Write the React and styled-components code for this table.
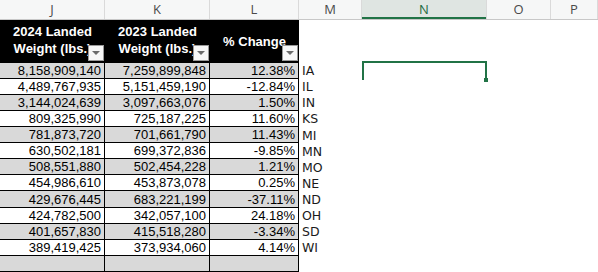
import React from 'react';
import styled, { createGlobalStyle } from 'styled-components';

const GlobalStyle = createGlobalStyle`
    body {
        margin: 0;
        background: #ffffff;
        font-family: "Liberation Sans", Arial, sans-serif;
    }
`;

const COLUMNS = '105px 105px 89px 63px 125px 64px 1fr';

const Sheet = styled.div`
    display: flex;
    flex-direction: column;
    width: 598px;
    height: 272px;
    overflow: hidden;
    background: #ffffff;
`;

const LetterRow = styled.div`
    display: grid;
    grid-template-columns: ${COLUMNS};
    height: 21px;
    background: #f6f7f7;
    border-bottom: 1px solid #c8c8c8;
    box-sizing: border-box;
`;

const Letter = styled.div`
    display: flex;
    align-items: center;
    justify-content: center;
    font-family: "Open Sans", "Noto Sans", sans-serif;
    font-size: 13px;
    color: ${props => props.active ? '#1e6b41' : '#4a4a4a'};
    background: ${props => props.active ? '#dfe5e2' : 'transparent'};
    border-right: 1px solid #dadada;
    box-shadow: ${props => props.active ? 'inset 0 -2px 0 #217346' : 'none'};
`;

const HeadRow = styled.div`
    display: grid;
    grid-template-columns: ${COLUMNS};
    height: 45px;
`;

const HeadCell = styled.div`
    position: relative;
    display: flex;
    flex-direction: column;
    align-items: center;
    justify-content: center;
    background: #000000;
    color: #ffffff;
    font-weight: 700;
    font-size: 13px;
    line-height: 17px;
    white-space: nowrap;
    overflow: hidden;
    padding-bottom: ${props => props.single ? '0' : '2px'};
`;

const FilterButton = styled.div`
    position: absolute;
    right: 1px;
    bottom: 2px;
    width: 16px;
    height: 16px;
    box-sizing: border-box;
    background: #f7f7f7;
    border: 1px solid #9a9a9a;
    display: flex;
    align-items: center;
    justify-content: center;

    &::after {
        content: '';
        width: 0;
        height: 0;
        border-left: 4px solid transparent;
        border-right: 4px solid transparent;
        border-top: 4px solid #6b6b6b;
        margin-top: 1px;
    }
`;

const DataRow = styled.div`
    display: grid;
    grid-template-columns: ${COLUMNS};
    height: 17px;
`;

const NumCell = styled.div`
    display: flex;
    align-items: center;
    justify-content: flex-end;
    padding-right: 3px;
    font-size: 13px;
    color: #000000;
    background: ${props => props.shaded ? '#d9d9d9' : '#ffffff'};
    border-right: 1px solid #000000;
    border-bottom: 1px solid #000000;
    box-sizing: border-box;
`;

const StateCell = styled.div`
    display: flex;
    align-items: center;
    padding-left: 3px;
    font-family: "DejaVu Sans", sans-serif;
    font-size: 12.5px;
    color: #1a1a1a;
`;

const Blank = styled.div`
    position: relative;
`;

const Selection = styled.div`
    position: absolute;
    left: 0;
    right: 0;
    top: -2px;
    height: 19px;
    border: 2px solid #217346;
    border-bottom: none;
    box-sizing: border-box;

    &::after {
        content: '';
        position: absolute;
        right: -3px;
        bottom: -2px;
        width: 4px;
        height: 4px;
        background: #217346;
    }
`;

const rows = [
    ['8,158,909,140', '7,259,899,848', '12.38%', 'IA'],
    ['4,489,767,935', '5,151,459,190', '-12.84%', 'IL'],
    ['3,144,024,639', '3,097,663,076', '1.50%', 'IN'],
    ['809,325,990', '725,187,225', '11.60%', 'KS'],
    ['781,873,720', '701,661,790', '11.43%', 'MI'],
    ['630,502,181', '699,372,836', '-9.85%', 'MN'],
    ['508,551,880', '502,454,228', '1.21%', 'MO'],
    ['454,986,610', '453,873,078', '0.25%', 'NE'],
    ['429,676,445', '683,221,199', '-37.11%', 'ND'],
    ['424,782,500', '342,057,100', '24.18%', 'OH'],
    ['401,657,830', '415,518,280', '-3.34%', 'SD'],
    ['389,419,425', '373,934,060', '4.14%', 'WI'],
    ['', '', '', ''],
];

const letters = ['J', 'K', 'L', 'M', 'N', 'O', 'P'];

const App = () => {
    return (
        <Sheet>
            <GlobalStyle />
            <LetterRow>
                {letters.map((l) => (
                    <Letter key={l} active={l === 'N'}>{l}</Letter>
                ))}
            </LetterRow>

            <HeadRow>
                <HeadCell>
                    <span>2024 Landed</span>
                    <span>Weight (lbs.)</span>
                    <FilterButton />
                </HeadCell>
                <HeadCell>
                    <span>2023 Landed</span>
                    <span>Weight (lbs.)</span>
                    <FilterButton />
                </HeadCell>
                <HeadCell single>
                    <span>% Change</span>
                    <FilterButton />
                </HeadCell>
            </HeadRow>

            {rows.map((r, i) => (
                <DataRow key={i}>
                    <NumCell shaded={i % 2 === 0}>{r[0]}</NumCell>
                    <NumCell shaded={i % 2 === 0}>{r[1]}</NumCell>
                    <NumCell shaded={i % 2 === 0}>{r[2]}</NumCell>
                    <StateCell>{r[3]}</StateCell>
                    <Blank>{i === 0 && <Selection />}</Blank>
                </DataRow>
            ))}
        </Sheet>
    );
};

export default App;
